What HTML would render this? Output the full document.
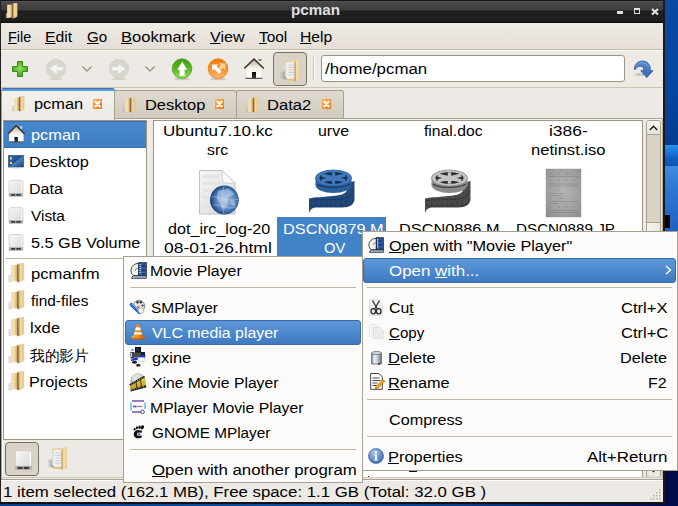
<!DOCTYPE html>
<html><head><meta charset="utf-8">
<style>
*{margin:0;padding:0;box-sizing:border-box}
html,body{width:678px;height:506px;overflow:hidden;background:#000c48}
body{position:relative;font-family:"Liberation Sans",sans-serif;font-size:14px;color:#000}
.a{position:absolute}
.t{position:absolute;white-space:pre;line-height:15px;font-size:14.7px}
.u{text-decoration:underline;text-underline-offset:1px;text-decoration-thickness:1px}
svg{position:absolute;overflow:visible}
</style></head><body>
<svg width="0" height="0" style="position:absolute">
<defs>
<linearGradient id="gFold" x1="0" y1="0" x2="1" y2="0"><stop offset="0" stop-color="#f1dcaa"></stop><stop offset=".45" stop-color="#f5e2b4"></stop><stop offset="1" stop-color="#d2ad6c"></stop></linearGradient>
<linearGradient id="gFold2" x1="0" y1="0" x2="1" y2="0"><stop offset="0" stop-color="#c49d5e"></stop><stop offset=".35" stop-color="#f0d7a0"></stop><stop offset="1" stop-color="#e5c78c"></stop></linearGradient>
<linearGradient id="gClose" x1="0" y1="0" x2="1" y2="1"><stop offset="0" stop-color="#ffae58"></stop><stop offset="1" stop-color="#fb7408"></stop></linearGradient>
<symbol id="fold16" viewBox="0 0 18 20">
<path d="M0.5 13.5 C1 12.5 3 12 4.5 12.5 L4.5 19 C3 19.5 1 19 0.5 18Z" fill="url(#gSh)"></path>
<path d="M3.2 13 L4.5 12.8 L4.5 18.6 L3.4 18.4Z" fill="#f2f4f6"></path>
<path d="M4 2.2 L10.3 1.8 L10.3 18.2 L4 18.6Z" fill="url(#gFold)"></path>
<path d="M10 1.6 L11.8 1.2 L11.9 19.6 L10 18.4Z" fill="#8d6a38"></path>
<path d="M11.6 0.4 L17.2 0 L17.2 17 L11.8 19.6Z" fill="url(#gFold2)"></path>
</symbol>
</defs>
</svg>

<!-- desktop -->
<div class="a" style="left:665px;top:0;width:13px;height:145px;background:linear-gradient(#0a4aa0,#0646a0 60%,#053c90)"></div>
<div class="a" style="left:665px;top:145px;width:13px;height:23px;background:linear-gradient(175deg,#2a92f4 0,#1a78e0 30%,#0f5cc0 60%,#0d55b5 100%)"></div>
<div class="a" style="left:665px;top:166px;width:13px;height:65px;background:linear-gradient(#3d8ce2,#2c74d2 40%,#2262c2)"></div>
<div class="a" style="left:665px;top:215px;width:5px;height:13px;background:#050505"></div>
<div class="a" style="left:665px;top:231px;width:13px;height:275px;background:#000c48"></div>
<!-- window -->
<div class="a" style="left:0;top:0;width:665px;height:503px;background:#edeae5"></div>
<!-- title bar -->
<div class="a" style="left:0;top:0;width:665px;height:23px;background:linear-gradient(#161616 0,#161616 1px,#5b5b5b 1px,#4a4a4a 2px,#3c3c3c 10px,#1f1f1f 11px,#1e1e1e 21px,#111 22px)"></div>
<div class="a" style="left:663px;top:0;width:2px;height:503px;background:#1a1a1a"></div>
<div class="a" style="left:0;top:0;width:1px;height:506px;background:#222"></div>
<svg style="left:4px;top:3px" width="14" height="16" viewBox="0 0 18 20" preserveAspectRatio="none"><use href="#fold16"></use></svg>
<div class="t" style="font-weight: bold; color: rgb(224, 224, 224); left: 291.4px; top: 3px; transform-origin: 0px 0px; transform: scaleX(1.0344);">pcman</div>
<div class="a" style="left:617px;top:11px;width:6px;height:3px;background:#ddd"></div>
<div class="a" style="left:634px;top:8px;width:6px;height:6px;border:1px solid #ddd;border-top-width:2px"></div>
<svg style="left:650.5px;top:7.5px" width="8" height="7.5" viewBox="0 0 8 7.5"><path d="M1 1L7 6.5M7 1L1 6.5" stroke="#e2e2e2" stroke-width="2.2"></path><rect x="2.8" y="2.5" width="2.4" height="2.5" fill="#e2e2e2"></rect></svg>

<!-- menubar -->
<div class="a" style="left:1px;top:23px;width:662px;height:26px;background:linear-gradient(#edeae4,#e6dfd8)"></div>
<div class="a" style="left:1px;top:49px;width:662px;height:1px;background:#c8bcaa"></div>
<div class="a" style="left:1px;top:50px;width:662px;height:1px;background:#fbfaf8"></div>
<div class="t" style="left: 8.32px; top: 30.3px; transform-origin: 0px 0px; transform: scaleX(0.9779);"><span class="u">F</span>ile</div>
<div class="t" style="left: 44.93px; top: 30.3px; transform-origin: 0px 0px; transform: scaleX(1.0731);"><span class="u">E</span>dit</div>
<div class="t" style="left: 87px; top: 30.3px; transform-origin: 0px 0px; transform: scaleX(1.0296);"><span class="u">G</span>o</div>
<div class="t" style="left: 120.88px; top: 30.3px; transform-origin: 0px 0px; transform: scaleX(1.1251);"><span class="u">B</span>ookmark</div>
<div class="t" style="left: 210px; top: 30.3px; transform-origin: 0px 0px; transform: scaleX(1.095);"><span class="u">V</span>iew</div>
<div class="t" style="left: 259px; top: 30.3px; transform-origin: 0px 0px; transform: scaleX(1.0495);"><span class="u">T</span>ool</div>
<div class="t" style="left: 299.93px; top: 30.3px; transform-origin: 0px 0px; transform: scaleX(1.0676);"><span class="u">H</span>elp</div>

<!-- toolbar -->
<div class="a" style="left:1px;top:87px;width:662px;height:1px;background:#cdc4b4"></div>

<!-- location entry -->
<div class="a" style="left:321px;top:55px;width:304px;height:27px;background:#fff;border:1px solid #9d9584;border-radius:3px"></div>
<div class="t" style="left: 324.8px; top: 62.3px; transform-origin: 0px 0px; transform: scaleX(1.1484);">/home/pcman</div>

<!-- toolbar icons -->
<svg style="left:12px;top:61px" width="16" height="16" viewBox="0 0 16 16">
<defs><radialGradient id="gPlus" cx=".5" cy=".45" r=".6"><stop offset="0" stop-color="#8fe35a"></stop><stop offset="1" stop-color="#3f9a1a"></stop></radialGradient></defs>
<path d="M5.5 0.5h5v5h5v5h-5v5h-5v-5h-5v-5h5z" fill="url(#gPlus)" stroke="#3a8a17" stroke-width="1"></path>
</svg>
<svg style="left:46px;top:59px" width="20" height="21" viewBox="0 0 20 21">
<ellipse cx="10" cy="20" rx="7" ry="1" fill="#d5d1c9"></ellipse>
<circle cx="10" cy="9.8" r="9.6" fill="#d8d6ce" stroke="#d0cdc4" stroke-width=".6"></circle>
<path d="M3.8 9.6 L10.7 4.9 L10.7 8 L17.1 8 L17.1 11.5 L10.7 11.5 L10.7 14.9Z" fill="#f4f3ef"></path>
</svg>
<svg style="left:82px;top:66px" width="10" height="6"><path d="M0.5 0.5 L5 5 L9.5 0.5" fill="none" stroke="#9d9080" stroke-width="1.3"></path></svg>
<svg style="left:109px;top:59px" width="20" height="21" viewBox="0 0 20 21">
<ellipse cx="10" cy="20" rx="7" ry="1" fill="#d5d1c9"></ellipse>
<circle cx="10" cy="9.8" r="9.6" fill="#d8d6ce" stroke="#d0cdc4" stroke-width=".6"></circle>
<path d="M16.2 9.6 L9.3 4.9 L9.3 8 L2.9 8 L2.9 11.5 L9.3 11.5 L9.3 14.9Z" fill="#f4f3ef"></path>
</svg>
<svg style="left:145px;top:66px" width="10" height="6"><path d="M0.5 0.5 L5 5 L9.5 0.5" fill="none" stroke="#9d9080" stroke-width="1.3"></path></svg>
<svg style="left:168px;top:55px" width="28" height="28" viewBox="0 0 28 28">
<defs><linearGradient id="gUp" x1="0" y1="0" x2="0" y2="1"><stop offset="0" stop-color="#3e9c10"></stop><stop offset=".55" stop-color="#5cb82a"></stop><stop offset="1" stop-color="#98e25c"></stop></linearGradient></defs>
<ellipse cx="14" cy="24" rx="8" ry="1.3" fill="#b5b0a6" opacity=".6"></ellipse>
<circle cx="14" cy="13.6" r="9.8" fill="url(#gUp)" stroke="#48a01c" stroke-width=".8"></circle>
<path d="M14.2 6.5 L19.3 14.8 L16.6 14.8 L16.6 21 L11.6 21 L11.6 14.8 L9.2 14.8Z" fill="#fbfdf8"></path>
</svg>
<svg style="left:204px;top:55px" width="28" height="28" viewBox="0 0 28 28">
<defs><linearGradient id="gOr" x1="0" y1="0" x2="0" y2="1"><stop offset="0" stop-color="#f07c10"></stop><stop offset=".6" stop-color="#f79430"></stop><stop offset="1" stop-color="#ffbe70"></stop></linearGradient></defs>
<ellipse cx="14" cy="24" rx="8" ry="1.3" fill="#b5b0a6" opacity=".6"></ellipse>
<circle cx="14" cy="13.6" r="9.8" fill="url(#gOr)" stroke="#ea7a14" stroke-width=".8"></circle>
<path d="M15.5 8 L21.5 8.5 L21 15 L19 13 L16 16 L13.5 13.5 L16.5 10.5Z" fill="#ffd9ad" opacity=".85"></path>
<path d="M8 9.5 L14.5 9.5 L12.5 11.5 L17.5 16.5 L15 19 L10 14 L8 16Z" fill="#fbfbfb"></path>
</svg>
<svg style="left:238px;top:54px" width="32" height="30" viewBox="0 0 32 30">
<defs><linearGradient id="gHw" x1="0" y1="0" x2="0" y2="1"><stop offset="0" stop-color="#b9a896"></stop><stop offset=".45" stop-color="#f6f2ee"></stop><stop offset="1" stop-color="#fffefc"></stop></linearGradient>
<linearGradient id="gDoor" x1="0" y1="0" x2="0" y2="1"><stop offset="0" stop-color="#000"></stop><stop offset="1" stop-color="#4a3f30"></stop></linearGradient></defs>
<path d="M7.5 14 L16 5.5 L24.5 14 L24.5 24.5 L7.5 24.5Z" fill="url(#gHw)"></path>
<path d="M6.3 14.5 L16 5 L25.7 14.5" fill="none" stroke="#3f3122" stroke-width="1.6" stroke-linejoin="round"></path>
<path d="M20.5 6 L23.5 6" stroke="#3f3122" stroke-width="1.2"></path>
<rect x="14" y="18" width="4" height="6.5" fill="url(#gDoor)"></rect>
<path d="M7.5 24.3 L24.5 24.3" stroke="#3a3022" stroke-width="1"></path>
<path d="M7.6 14 L7.6 24 M24.4 14 L24.4 24" stroke="#d8d0c6" stroke-width=".5"></path>
</svg>
<div class="a" style="left:273px;top:52px;width:34px;height:34px;background:#d8d2c8;border:1px solid #776d5d;border-radius:4px"></div>
<svg width="0" height="0"><defs>
<linearGradient id="gOf" x1="0" y1="0" x2="1" y2="0"><stop offset="0" stop-color="#e6c688"></stop><stop offset=".4" stop-color="#f8e2b0"></stop><stop offset="1" stop-color="#e9cc92"></stop></linearGradient>
<linearGradient id="gSh" x1="1" y1="0" x2="0" y2="0"><stop offset="0" stop-color="#8f8a82" stop-opacity=".7"></stop><stop offset="1" stop-color="#8f8a82" stop-opacity="0"></stop></linearGradient>
<symbol id="ofold" viewBox="0 0 28 28">
<path d="M4 15.5 L9.5 15.5 L9.5 23.5 L4 23Z" fill="url(#gSh)"></path>
<path d="M9 4.8 L24 3.3 L24 24.4 L9 24.4Z" fill="#edd096"></path>
<path d="M8.6 7.2 L12.5 6.4 L12.5 22.5 L9.2 22.8Z" fill="#dedede"></path>
<path d="M11 6 L19 5.6 L19 23.3 L10 23.3Z" fill="#eeeeee"></path>
<path d="M12.5 9h5.5M12.5 11.5h5.5M12.5 14h5.5M12.5 16.5h5.5M12.5 19h5.5" stroke="#c6c6c6" stroke-width=".8"></path>
<path d="M9.2 17.5 L10.2 24.2 L19 25.2 L19 22.8 L10.5 22.8Z" fill="#e2c384"></path>
<path d="M9.5 21 L10.2 23.5" stroke="#5a8fcf" stroke-width=".8"></path>
<path d="M19 5.5 L24 3.3 L24 20.5 L19 25.4Z" fill="url(#gOf)"></path>
<path d="M19 5.5 L19 25.4" stroke="#b38d52" stroke-width="1"></path>
</symbol></defs></svg>
<svg style="left:276px;top:56px" width="28" height="28"><use href="#ofold"></use></svg>
<div class="a" style="left:313px;top:57px;width:1px;height:23px;background:#c9c3b8"></div>
<div class="a" style="left:314px;top:57px;width:1px;height:23px;background:#fbfaf8"></div>
<svg style="left:628px;top:56px" width="32" height="28" viewBox="0 0 32 28">
<defs><linearGradient id="gRef" x1="0" y1="0" x2="0" y2="1"><stop offset="0" stop-color="#5a8bd2"></stop><stop offset="1" stop-color="#3565b0"></stop></linearGradient></defs>
<ellipse cx="12" cy="18.5" rx="5" ry="1.5" fill="#bdb8ae" opacity=".7"></ellipse>
<path d="M6.3 13.3 C6.5 8 10.5 5 14.5 5 C19 5 22.3 8.5 22.3 12.8 L22.3 14.7 L25 14.7 L18.8 21.6 L12.8 14.7 L15.6 14.7 L15.6 13 C15.6 11.3 14 10.2 12.3 10.2 C9.8 10.2 8.2 11.6 7.3 13.6 Z" fill="url(#gRef)" stroke="#2a549a" stroke-width=".8" stroke-linejoin="round"></path>
<path d="M8 11 C9 8 12 6.5 15 6.8 C18 7 20.2 9.5 20.5 12.5" fill="none" stroke="#8fb2e4" stroke-width=".8" opacity=".7"></path>
</svg>

<!-- tabs -->
<div class="a" style="left:114px;top:90px;width:123px;height:28px;background:linear-gradient(#dfd9d0,#d2cbbf);border:1px solid #a89f8f;border-bottom:none;border-radius:3px 3px 0 0"></div>
<div class="a" style="left:236px;top:90px;width:108px;height:28px;background:linear-gradient(#dfd9d0,#d2cbbf);border:1px solid #a89f8f;border-bottom:none;border-radius:3px 3px 0 0"></div>
<div class="a" style="left:1px;top:118px;width:662px;height:1px;background:#a59c8b"></div>
<div class="a" style="left:1px;top:119px;width:662px;height:1px;background:#f7f5f1"></div>
<div class="a" style="left:1px;top:88px;width:114px;height:32px;background:linear-gradient(#f4f2ee,#edeae5);border:1px solid #a89f8f;border-top:none;border-bottom:none;border-radius:3px 3px 0 0"></div>
<div class="a" style="left:1px;top:88px;width:114px;height:3px;background:linear-gradient(#3a6cae 0,#3a6cae 1px,#5b9be0 1px);border-radius:3px 3px 0 0"></div>
<svg style="left:11px;top:96px" width="14" height="16" viewBox="0 0 18 20" preserveAspectRatio="none"><use href="#fold16"></use></svg>
<svg style="left:122px;top:97px" width="14" height="16" viewBox="0 0 18 20" preserveAspectRatio="none"><use href="#fold16"></use></svg>
<svg style="left:245px;top:97px" width="14" height="16" viewBox="0 0 18 20" preserveAspectRatio="none"><use href="#fold16"></use></svg>
<div class="t" style="left: 34px; top: 96.8px; transform-origin: 0px 0px; transform: scaleX(1.1158);">pcman</div>
<div class="t" style="left: 144.88px; top: 97.6px; transform-origin: 0px 0px; transform: scaleX(1.1193);">Desktop</div>
<div class="t" style="left: 267.27px; top: 97.6px; transform-origin: 0px 0px; transform: scaleX(1.1309);">Data2</div>
<svg style="left:93px;top:99px" width="9" height="10" viewBox="0 0 9 10"><rect width="9" height="10" fill="url(#gClose)"></rect><path d="M2.3 2.5L6.7 7.5M6.7 2.5L2.3 7.5" stroke="#fff" stroke-width="2" stroke-linecap="round"></path></svg>
<svg style="left:215px;top:99px" width="9" height="10" viewBox="0 0 9 10"><rect width="9" height="10" fill="url(#gClose)"></rect><path d="M2.3 2.5L6.7 7.5M6.7 2.5L2.3 7.5" stroke="#fff" stroke-width="2" stroke-linecap="round"></path></svg>
<svg style="left:322px;top:99px" width="9" height="10" viewBox="0 0 9 10"><rect width="9" height="10" fill="url(#gClose)"></rect><path d="M2.3 2.5L6.7 7.5M6.7 2.5L2.3 7.5" stroke="#fff" stroke-width="2" stroke-linecap="round"></path></svg>

<div class="a" style="left:1px;top:118px;width:1px;height:361px;background:#a89f8f"></div>
<div class="a" style="left:2px;top:120px;width:1px;height:357px;background:#fdfcfb"></div>
<div class="a" style="left:662px;top:118px;width:1px;height:361px;background:#b3aa9a"></div>
<div class="a" style="left:661px;top:120px;width:1px;height:357px;background:#e8e4dc"></div>
<!-- sidebar -->
<div class="a" style="left:3px;top:120px;width:144px;height:320px;background:#fff;border:1px solid #9d9585"></div>
<div class="a" style="left:4px;top:121px;width:142px;height:27px;background:linear-gradient(#4788cc,#3f7dc0);border-top:1px solid #3a6faa;border-bottom:1px solid #3a6faa"></div>
<div class="a" style="left:5px;top:258px;width:141px;height:1px;background:#bfb5a3"></div>
<svg style="left:4px;top:122px" width="24" height="24" viewBox="0 0 24 24">
<defs><linearGradient id="gHw2" x1="0" y1="0" x2="0" y2="1"><stop offset="0" stop-color="#c2b3a2"></stop><stop offset=".5" stop-color="#f8f5f1"></stop><stop offset="1" stop-color="#fffefc"></stop></linearGradient></defs>
<path d="M5 11.5 L12.2 4.3 L19.6 11.5 L19.6 20 L5 20Z" fill="url(#gHw2)"></path>
<path d="M4 12 L12.2 3.8 L20.6 12" fill="none" stroke="#3f3122" stroke-width="1.4" stroke-linejoin="round"></path>
<rect x="16.2" y="4.2" width="2" height="2.5" fill="#ddd6cc"></rect>
<rect x="10.5" y="15" width="3.3" height="5" fill="url(#gDoor)"></rect>
<path d="M5 19.8 L19.6 19.8" stroke="#3a3022" stroke-width=".8"></path>
</svg>
<svg style="left:8px;top:155px" width="16" height="14" viewBox="0 0 16 14">
<defs><linearGradient id="gDesk" x1="0" y1="0" x2="1" y2="1"><stop offset="0" stop-color="#3c6fae"></stop><stop offset=".45" stop-color="#1f4f8c"></stop><stop offset=".55" stop-color="#4a7fbe"></stop><stop offset="1" stop-color="#1a3f72"></stop></linearGradient></defs>
<rect x=".5" y=".5" width="15" height="11.5" fill="url(#gDesk)" stroke="#2a4a72" stroke-width=".7"></rect>
<rect x="2" y="2.3" width="2" height="2.2" fill="#e6cf80"></rect><rect x="2" y="6.8" width="2" height="2.2" fill="#e6cf80"></rect>
<path d="M1 12.3 C4 14 12 14 15 12.3" fill="#b8bec6" opacity=".7"></path>
</svg>
<svg width="0" height="0"><defs>
<linearGradient id="gDrv" x1="0" y1="0" x2="1" y2="1"><stop offset="0" stop-color="#f8f8f8"></stop><stop offset="1" stop-color="#d6d6d6"></stop></linearGradient>
<symbol id="drive" viewBox="0 0 16 17">
<path d="M1 2 C1 1 1.8 0.5 2.8 0.5 L13.2 0.5 C14.2 0.5 15 1 15 2 L15 16.3 L1 16.3Z" fill="url(#gDrv)" stroke="#c4c4c4" stroke-width=".6"></path>
<path d="M13.8 1.5 L13.8 13" stroke="#fff" stroke-width=".8"></path>
<rect x="1" y="13.2" width="14" height="3.3" fill="#b0b0b0"></rect>
<rect x="3" y="14" width="4.2" height="1.8" fill="#3d3d3d"></rect><rect x="8.2" y="14" width="4.6" height="1.8" fill="#3d3d3d"></rect>
</symbol></defs></svg>
<svg style="left:8px;top:179.5px" width="16" height="17"><use href="#drive"></use></svg>
<svg style="left:8px;top:206.5px" width="16" height="17"><use href="#drive"></use></svg>
<svg style="left:8px;top:233.5px" width="16" height="17"><use href="#drive"></use></svg>
<svg style="left:7px;top:263px" width="18" height="20"><use href="#fold16"></use></svg>
<svg style="left:7px;top:290px" width="18" height="20"><use href="#fold16"></use></svg>
<svg style="left:7px;top:317px" width="18" height="20"><use href="#fold16"></use></svg>
<svg style="left:7px;top:344px" width="18" height="20"><use href="#fold16"></use></svg>
<svg style="left:7px;top:371px" width="18" height="20"><use href="#fold16"></use></svg>
<div class="t" style="color: rgb(255, 255, 255); left: 30.6px; top: 127.6px; transform-origin: 0px 0px; transform: scaleX(1.1158);">pcman</div>
<div class="t" style="left: 29.39px; top: 154.9px; transform-origin: 0px 0px; transform: scaleX(1.1098);">Desktop</div>
<div class="t" style="left: 29.41px; top: 181.8px; transform-origin: 0px 0px; transform: scaleX(1.0922);">Data</div>
<div class="t" style="left: 30.5px; top: 208.9px; transform-origin: 0px 0px; transform: scaleX(1.0476);">Vista</div>
<div class="t" style="left: 31.4px; top: 236.2px; transform-origin: 0px 0px; transform: scaleX(1.1053);">5.5 GB Volume</div>
<div class="t" style="left: 30.7px; top: 266.9px; transform-origin: 0px 0px; transform: scaleX(1.1352);">pcmanfm</div>
<div class="t" style="left: 31.1px; top: 294px; transform-origin: 0px 0px; transform: scaleX(1.0488);">find-files</div>
<div class="t" style="left: 30.4px; top: 321.1px; transform-origin: 0px 0px; transform: scaleX(1.113);">lxde</div>
<div class="t" style="font-weight: 500; font-size: 14.5px; left: 30.4px; top: 348.8px; transform-origin: 0px 0px; transform: scaleX(0.9783);">我的影片</div>
<div class="t" style="left: 29.29px; top: 375px; transform-origin: 0px 0px; transform: scaleX(1.1061);">Projects</div>
<!-- sidebar buttons -->
<div class="a" style="left:5px;top:442px;width:34px;height:34px;background:#d8d2c8;border:1px solid #776d5d;border-radius:4px"></div>
<svg style="left:13.5px;top:449.5px" width="19" height="20.5" viewBox="0 0 16 17" preserveAspectRatio="none"><use href="#drive"></use></svg>
<svg style="left:43px;top:444px" width="28" height="28"><use href="#ofold"></use></svg>

<!-- file view -->
<div class="a" style="left:153px;top:120px;width:490px;height:358px;background:#fff;border:1px solid #9d9585"></div>
<div class="a" style="left:646px;top:120px;width:15px;height:358px;background:#d9d2c6;border:1px solid #a89f8f;border-radius:3px"></div>
<div class="a" style="left:647px;top:121px;width:13px;height:14px;background:linear-gradient(#f8f6f3,#e7e2db);border-bottom:1px solid #a89f8f;border-radius:2px 2px 0 0"></div>
<svg style="left:648.8px;top:124.5px" width="9" height="6"><path d="M0.8 5 L4.5 1.3 L8.2 5" fill="none" stroke="#1e1e1e" stroke-width="1.5"></path></svg>
<div class="a" style="left:647px;top:222px;width:13px;height:241px;background:linear-gradient(90deg,#f6f4f0,#ebe7e1);border-top:1px solid #a89f8f;border-bottom:1px solid #a89f8f"></div>
<div class="a" style="left:647px;top:463px;width:13px;height:14px;background:linear-gradient(#f8f6f3,#e7e2db);border-top:1px solid #a89f8f;border-radius:0 0 2px 2px"></div>
<div class="t" style="left: 163.14px; top: 123.9px; transform-origin: 0px 0px; transform: scaleX(1.1599);">Ubuntu7.10.kc</div>
<div class="t" style="left: 207.3px; top: 142.5px; transform-origin: 0px 0px; transform: scaleX(1.0762);">src</div>
<div class="t" style="left: 318px; top: 123.9px; transform-origin: 0px 0px; transform: scaleX(1.0844);">urve</div>
<div class="t" style="left: 423.8px; top: 123.6px; transform-origin: 0px 0px; transform: scaleX(1.0706);">final.doc</div>
<div class="t" style="left: 548.9px; top: 123.6px; transform-origin: 0px 0px; transform: scaleX(1.1841);">i386-</div>
<div class="t" style="left: 531.4px; top: 142.8px; transform-origin: 0px 0px; transform: scaleX(1.1264);">netinst.iso</div>
<!-- globe doc -->
<svg style="left:198px;top:169px" width="42" height="48" viewBox="0 0 42 48">
<defs><linearGradient id="gDoc" x1="0" y1="0" x2="1" y2="1"><stop offset="0" stop-color="#f6f6f6"></stop><stop offset="1" stop-color="#d8d8d8"></stop></linearGradient>
<radialGradient id="gGlobe" cx=".55" cy=".5" r=".55"><stop offset="0" stop-color="#a6bfdf"></stop><stop offset=".6" stop-color="#5b86c0"></stop><stop offset="1" stop-color="#173f7a"></stop></radialGradient></defs>
<path d="M1.5 1.5 L24 1.5 L37 14.5 L37 45 L1.5 45Z" fill="url(#gDoc)" stroke="#c2c2c2" stroke-width="1"></path>
<path d="M24 1.5 L25 13.5 L37 14.5Z" fill="#fdfdfd" stroke="#c8c8c8" stroke-width=".8"></path>
<path d="M5 7.5h17M5 14.5h17M5 21.5h17M5 28.5h14M5 35.5h14" stroke="#e3e3e3" stroke-width="3"></path>
<circle cx="26.4" cy="31" r="14.4" fill="url(#gGlobe)"></circle>
<path d="M20 22 C23 20 26 22 28 20 C31 19 34 22 36 25 C34 27 32 27 30 29 C28 32 31 35 28 39 C25 41 23 38 22 35 C21 32 18 30 19 27Z" fill="#d0dff0" opacity=".45"></path>
<path d="M33 30 C35 31 37 33 38 36 C36 38 34 37 33 35Z" fill="#d0dff0" opacity=".4"></path>
<path d="M13 28 C20 26 30 34 40 30 M15 36 C22 35 30 41 38 38 M26 17 C23 25 24 38 26 45" stroke="#e4eef8" stroke-width=".6" fill="none" opacity=".6"></path>
</svg>
<!-- blue reel -->
<svg width="0" height="0"><defs>
<symbol id="reel" viewBox="0 0 60 54">
<path d="M7 34.5 C15 32.5 36 33 42 29.5 C45.5 27.5 46 25 46 19 L52.5 17 L52.5 35 C52.5 40 48 43.5 40 43.5 L15 43.5 C11 43.5 8 45 7 49.5 Z" style="fill:var(--s)"></path>
<path d="M9 36.5 C18 35 38 37 46 33.5 C49 32 50.5 29 51 26" style="stroke:var(--p)" stroke-width="1" stroke-dasharray="1 1" fill="none"></path>
<path d="M9 42 L42 42 C47 42 50.5 39 51 35" style="stroke:var(--p)" stroke-width="1" stroke-dasharray="1 1" fill="none"></path>
<path d="M14 38 L14 41 M19 38 L19 41 M24 38 L24 41 M29 38 L29 41 M34 38 L34 41 M39 37.5 L39 41 M44 36 L44 40.5" style="stroke:var(--p)" stroke-width=".6" opacity=".6"></path>
<path d="M13.5 14 L13.5 21 A18 8 0 0 0 49.5 21 L49.5 14 Z" style="fill:var(--sd)"></path>
<path d="M15 20 C20 24 40 25 48 20" style="stroke:var(--p)" stroke-width="1.2" fill="none" opacity=".7"></path>
<ellipse cx="31.5" cy="14" rx="18" ry="8" style="fill:var(--t);stroke:var(--sd)" stroke-width=".8"></ellipse>
<ellipse cx="31.5" cy="14" rx="14" ry="6" style="fill:var(--h)"></ellipse>
<path d="M31.5 14 L31.50 19.80 M31.5 14 L19.81 16.90 M31.5 14 L19.81 11.10 M31.5 14 L31.50 8.20 M31.5 14 L43.19 11.10 M31.5 14 L43.19 16.90" style="stroke:var(--t)" stroke-width="3.4"></path>
<ellipse cx="31.5" cy="14" rx="4.5" ry="2.3" style="fill:var(--t)"></ellipse>
</symbol></defs></svg>
<svg style="left:302px;top:164px;--s:#22497a;--p:#0f2a4a;--sd:#2d5e9c;--t:#4279be;--h:#12304f" width="60" height="54"><use href="#reel"></use></svg>
<svg style="left:418px;top:164px;--s:#4a4a4a;--p:#1e1e1e;--sd:#8a8a8a;--t:#c4c4c4;--h:#2e2e2e" width="60" height="54"><use href="#reel"></use></svg>
<!-- thumbnail -->
<div class="a" style="left:546px;top:169px;width:35px;height:48px;background:radial-gradient(ellipse at 50% 45%,#b2b5b1,#9da09c 65%,#878a86);box-shadow:0 0 1px #777"></div>
<svg style="left:546px;top:169px" width="35" height="48" viewBox="0 0 35 48">
<g stroke="#6d706c" stroke-width=".6" opacity=".55">
<path d="M4 4.5h2M12 4.5h2M19 4.5h7"></path>
<path d="M3 7.5h29"></path>
<path d="M4 11.5h2M12 11.5h2M19 11.5h2M27 11.5h2"></path>
<path d="M3 15h29M3 17h12M19 17h13"></path>
<path d="M4 21h2M12 21h2"></path>
<path d="M3 24.5h15M3 26.5h12"></path>
<path d="M4 29.5h2M11 29.5h7M26 29.5h2"></path>
<path d="M3 32.5h29M3 34.5h10"></path>
<path d="M4 38h2M12 38h2M19 38h2M27 38h2"></path>
<path d="M3 41.5h29M3 43.5h29"></path>
</g>
</svg>
<div class="t" style="left: 167.8px; top: 222.2px; transform-origin: 0px 0px; transform: scaleX(1.0978);">dot_irc_log-20</div>
<div class="t" style="left: 164.3px; top: 240.9px; transform-origin: 0px 0px; transform: scaleX(1.1897);">08-01-26.html</div>
<div class="a" style="left:277px;top:217px;width:109px;height:40px;background:#4283c7"></div>
<div class="t" style="color: rgb(255, 255, 255); left: 282.59px; top: 222.1px; transform-origin: 0px 0px; transform: scaleX(1.1111);">DSCN0879.M</div>
<div class="t" style="color: rgb(255, 255, 255); left: 324px; top: 240.9px; transform-origin: 0px 0px; transform: scaleX(0.9989);">OV</div>
<div class="t" style="left: 399.29px; top: 222.1px; transform-origin: 0px 0px; transform: scaleX(1.1089);">DSCN0886.M</div>
<div class="t" style="left: 516.26px; top: 222.1px; transform-origin: 0px 0px; transform: scaleX(1.0357);">DSCN0889.JP</div>

<!-- status bar -->
<div class="a" style="left:1px;top:477px;width:662px;height:1px;background:#cfc7b8"></div>
<div class="a" style="left:1px;top:479px;width:662px;height:1px;background:#a9a192"></div>
<div class="a" style="left:1px;top:480px;width:662px;height:1px;background:#fdfcfb"></div>
<div class="t" style="left: 3.26px; top: 485.3px; transform-origin: 0px 0px; transform: scaleX(1.1448);">1 item selected (162.1 MB), Free space: 1.1 GB (Total: 32.0 GB )</div>
<div class="a" style="left:0;top:502px;width:665px;height:2px;background:#111"></div>
<div class="a" style="left:0;top:504px;width:665px;height:2px;background:linear-gradient(90deg,#0a3c8a,#0b4aa0 40%,#0a3a88 70%,#000c48)"></div>
<svg style="left:649px;top:487px" width="13" height="13"><g fill="#b9b0a0"><rect x="10" y="2" width="1.5" height="1.5"></rect><rect x="7" y="5" width="1.5" height="1.5"></rect><rect x="10" y="5" width="1.5" height="1.5"></rect><rect x="4" y="8" width="1.5" height="1.5"></rect><rect x="7" y="8" width="1.5" height="1.5"></rect><rect x="10" y="8" width="1.5" height="1.5"></rect><rect x="1" y="11" width="1.5" height="1.5"></rect><rect x="4" y="11" width="1.5" height="1.5"></rect><rect x="7" y="11" width="1.5" height="1.5"></rect><rect x="10" y="11" width="1.5" height="1.5"></rect></g></svg>

<div class="a" style="left:409px;top:471px;width:8px;height:1px;background:#111"></div>
<div class="a" style="left:368px;top:476px;width:1px;height:1px;background:#333"></div>
<svg style="left:650px;top:469px" width="7" height="4"><path d="M0.5 0.5 L3.5 3.5 L6.5 0.5Z" fill="#1e1e1e"></path></svg>
<!-- left popup menu -->
<div class="a" style="left:123px;top:256px;width:240px;height:227px;background:#fcfbfa;border:1px solid #a8a08f"></div>
<div class="a" style="left:130px;top:287px;width:226px;height:1px;background:#c0b7a6"></div>
<div class="a" style="left:130px;top:449px;width:226px;height:1px;background:#c0b7a6"></div>
<div class="a" style="left:125px;top:320px;width:236px;height:25px;background:linear-gradient(#5c98d8,#3f7ac2);border:1px solid #3a6aa8;border-radius:3px"></div>
<div class="t" style="left: 149.92px; top: 264px; transform-origin: 0px 0px; transform: scaleX(1.0798);">Movie Player</div>
<div class="t" style="left: 151px; top: 301.1px; transform-origin: 0px 0px; transform: scaleX(1.0506);">SMPlayer</div>
<div class="t" style="color: rgb(255, 255, 255); left: 151.5px; top: 325.6px; transform-origin: 0px 0px; transform: scaleX(1.0826);">VLC media player</div>
<div class="t" style="left: 151.5px; top: 350.9px; transform-origin: 0px 0px; transform: scaleX(1.1132);">gxine</div>
<div class="t" style="left: 151.5px; top: 375.7px; transform-origin: 0px 0px; transform: scaleX(1.0677);">Xine Movie Player</div>
<div class="t" style="left: 150.43px; top: 400.9px; transform-origin: 0px 0px; transform: scaleX(1.0743);">MPlayer Movie Player</div>
<div class="t" style="left: 151.5px; top: 425.9px; transform-origin: 0px 0px; transform: scaleX(1.0437);">GNOME MPlayer</div>
<div class="t" style="left: 151.5px; top: 462.8px; transform-origin: 0px 0px; transform: scaleX(1.1453);"><span class="u">O</span>pen with another program</div>
<svg width="0" height="0"><defs>
<symbol id="mplay" viewBox="0 0 17 17">
<path d="M9 1.5 C4.5 1.2 1 4.5 1 8.5 C1 11 2 12.5 3.5 13.5 L9 13.5Z" fill="#f2f2f2" stroke="#2a2a2a" stroke-width=".9"></path>
<path d="M5.5 8.5 A2 2 0 0 1 9 7" fill="none" stroke="#666" stroke-width=".8"></path>
<rect x="8.8" y="0.8" width="7.4" height="13" fill="#3b6fc2" stroke="#151515" stroke-width="1"></rect>
<path d="M10 2v10" stroke="#fff" stroke-width="1" stroke-dasharray="1 1"></path>
<rect x="11.5" y="2.5" width="3.5" height="3" fill="#1d3f78"></rect><rect x="11.5" y="6.8" width="3.5" height="3" fill="#1d3f78"></rect><rect x="11.5" y="11" width="3.5" height="1.8" fill="#1d3f78"></rect>
<path d="M1.5 16.3 L3 13.8 L16.3 13.8 L16.3 16.3Z" fill="#dfe6ee" stroke="#2a2a2a" stroke-width=".9"></path>
<path d="M4 15 L15 15" stroke="#4a7fc8" stroke-width=".8"></path>
</symbol></defs></svg>
<svg style="left:129.5px;top:261.5px" width="17" height="17"><use href="#mplay"></use></svg>
<svg style="left:130px;top:299px" width="15" height="15" viewBox="0 0 15 15">
<circle cx="9" cy="7" r="5.8" fill="#e3e7ec" stroke="#6b7480" stroke-width=".8"></circle>
<circle cx="7.5" cy="3.3" r="1.2" fill="#2a2a2a"></circle><circle cx="10.8" cy="3.3" r="1.2" fill="#2a2a2a"></circle><circle cx="12.6" cy="6.5" r="1.1" fill="#2a2a2a"></circle>
<path d="M1.2 5.5 L9.5 13.5" stroke="#2c66c8" stroke-width="3.2" stroke-linecap="round"></path>
<path d="M2 5 L9 12" stroke="#9cc2f0" stroke-width="1"></path>
<circle cx="8.3" cy="8" r="1.3" fill="#f07d1c"></circle>
<circle cx="11" cy="11.5" r="2.8" fill="#f4f6f8" stroke="#8a94a0" stroke-width=".6"></circle>
</svg>
<svg style="left:131px;top:324px" width="14" height="16" viewBox="0 0 14 16">
<defs><linearGradient id="gCone" x1="0" y1="0" x2="1" y2="0"><stop offset="0" stop-color="#f7a040"></stop><stop offset=".5" stop-color="#ff8a10"></stop><stop offset="1" stop-color="#d85a00"></stop></linearGradient></defs>
<path d="M5.6 0.5 L8.4 0.5 L12 12.5 L2 12.5Z" fill="url(#gCone)"></path>
<path d="M4.8 3.6 L9.2 3.6 L9.9 6.2 L4.1 6.2Z" fill="#fff"></path>
<path d="M3.6 8.2 L10.4 8.2 L11 10.4 L3 10.4Z" fill="#fff"></path>
<path d="M0.5 12 L13.5 12 L13.5 15.2 L0.5 15.2Z" fill="url(#gCone)"></path>
<path d="M0.5 14.5 L13.5 14.5 L13.5 15.2 L0.5 15.2Z" fill="#b84c00"></path>
</svg>
<svg style="left:128px;top:344px" width="20" height="26" viewBox="0 0 20 26">
<rect x="2.5" y="8" width="3.5" height="6.5" fill="#3a3a3a"></rect><rect x="3" y="9" width="1.2" height="4" fill="#c8c8c8"></rect>
<rect x="13" y="8" width="4" height="6.5" fill="#1e1e1e"></rect>
<rect x="6" y="8.5" width="7" height="5" fill="#4a4a4a"></rect>
<rect x="7" y="3" width="6" height="5.8" fill="#0e0e0e"></rect><rect x="8" y="4" width="4" height="3.2" fill="#1c2c50"></rect>
<path d="M3 15.8 C6 13.2 9 14.2 12 12.2 C14 11 15.5 10.8 17.5 10.4 L17.5 12.6 C14.5 13.6 11.5 15 8.5 16.2 C6.5 16.8 4.5 16.4 3 17Z" fill="#1a35e8"></path>
<path d="M3.5 6.5 L5.5 5.5" stroke="#2a40d8" stroke-width="1.2"></path>
<rect x="10" y="13.5" width="6.5" height="4.2" fill="#f4f4f4" stroke="#c8c8c8" stroke-width=".5"></rect>
<ellipse cx="6.5" cy="18.3" rx="2.6" ry="1.4" fill="#111"></ellipse>
<ellipse cx="10.3" cy="21.3" rx="2.2" ry="1.3" fill="#222" stroke="#7a5a5a" stroke-width=".5"></ellipse>
</svg>
<svg style="left:128px;top:372px" width="22" height="20" viewBox="0 0 22 20">
<defs><radialGradient id="gXd" cx=".7" cy=".3" r=".8"><stop offset="0" stop-color="#f4c8c8"></stop><stop offset=".35" stop-color="#cfe8c8"></stop><stop offset=".6" stop-color="#e6e6e6"></stop><stop offset="1" stop-color="#a8a8a8"></stop></radialGradient>
<linearGradient id="gXs" x1="0" y1="0" x2="0" y2="1"><stop offset="0" stop-color="#f0d040"></stop><stop offset="1" stop-color="#b8961a"></stop></linearGradient></defs>
<circle cx="10" cy="9" r="7.2" fill="url(#gXd)" stroke="#6a6a6a" stroke-width=".6" stroke-dasharray="1 .6"></circle>
<path d="M1.8 13 L16.5 4.5 L18.2 14.3 L2.6 18.6Z" fill="url(#gXs)"></path>
<path d="M1.8 13 L16.5 4.5" stroke="#111" stroke-width="2"></path>
<path d="M2.6 18.6 L18.2 14.3" stroke="#111" stroke-width="2"></path>
<path d="M3 12.3 L15.8 5" stroke="#fff" stroke-width=".9" stroke-dasharray=".8 1.6"></path>
<path d="M3.6 18.1 L17.5 14.2" stroke="#fff" stroke-width=".9" stroke-dasharray=".8 1.6"></path>
<path d="M8 9.8 L9 16.8 M12.5 7.3 L13.5 15.5" stroke="#222" stroke-width=".9"></path>
</svg>
<svg style="left:130px;top:400px" width="16" height="14" viewBox="0 0 16 14">
<path d="M2 1 L14 1" stroke="#4a2f9a" stroke-width="1.2"></path>
<path d="M2 12 L11 12" stroke="#4a2f9a" stroke-width="1.2"></path>
<path d="M1 2.5 L1 10.5" stroke="#29b6e8" stroke-width="1.2"></path>
<path d="M15 2.5 L15 9" stroke="#29b6e8" stroke-width="1.2"></path>
<path d="M3 6.5h3.5" stroke="#4a48a8" stroke-width="1.6"></path><path d="M7 6.5h5.5" stroke="#8a8a9a" stroke-width="1.2"></path>
<circle cx="12.5" cy="11.8" r="1.8" fill="#fff" stroke="#3a3a6a" stroke-width=".9"></circle>
</svg>
<svg style="left:133px;top:424.5px" width="11" height="14" viewBox="0 0 11 14">
<path d="M5.5 5 C2 5 0.5 7.5 0.8 10 C1.2 12.8 4.5 14 7.5 13 C9 12.5 9.5 11 8.5 10.5 L5.5 10.8 C4 10.8 3.5 9.5 4 8.5 C4.5 7.5 6 7.3 7.5 7.8 C9 8.3 9.5 6.5 8.5 5.8 C7.5 5.2 6.5 5 5.5 5Z" fill="#111"></path>
<ellipse cx="6" cy="9.2" rx="1.6" ry="1.1" fill="#7a6aa8"></ellipse>
<ellipse cx="1.6" cy="4.2" rx="1" ry="1.2" fill="#111"></ellipse><ellipse cx="3.9" cy="2.8" rx="1.1" ry="1.5" fill="#111"></ellipse><ellipse cx="6.5" cy="2.2" rx="1.2" ry="1.7" fill="#111"></ellipse><ellipse cx="9.3" cy="2.3" rx="1.6" ry="2.2" fill="#111" transform="rotate(25 9.3 2.3)"></ellipse>
</svg>

<!-- right popup menu -->
<div class="a" style="left:362px;top:231px;width:316px;height:240px;background:#fcfbfa;border:1px solid #a8a08f"></div>
<div class="a" style="left:363px;top:258px;width:313px;height:25px;background:linear-gradient(#5c98d8,#3f7ac2);border:1px solid #3a6aa8;border-radius:3px"></div>
<div class="a" style="left:367px;top:287px;width:305px;height:1px;background:#c0b7a6"></div>
<div class="a" style="left:367px;top:399px;width:305px;height:1px;background:#c0b7a6"></div>
<div class="a" style="left:367px;top:436px;width:305px;height:1px;background:#c0b7a6"></div>
<svg style="left:368px;top:237px" width="16" height="16"><use href="#mplay"></use></svg>
<div class="t" style="left: 389px; top: 239px; transform-origin: 0px 0px; transform: scaleX(1.107);"><span class="u">O</span>pen with "Movie Player"</div>
<div class="t" style="color: rgb(255, 255, 255); left: 389px; top: 264.1px; transform-origin: 0px 0px; transform: scaleX(1.1515);">Open <span class="u">w</span>ith...</div>
<svg style="left:665px;top:265px" width="7" height="10"><path d="M1 1 L5.5 5 L1 9" fill="none" stroke="#fff" stroke-width="1.4"></path></svg>
<div class="t" style="left: 389px; top: 300.7px; transform-origin: 0px 0px; transform: scaleX(1.0801);">Cu<span class="u">t</span></div>
<div class="t" style="left: 389px; top: 325.9px; transform-origin: 0px 0px; transform: scaleX(1.0302);"><span class="u">C</span>opy</div>
<div class="t" style="left: 387.88px; top: 350.7px; transform-origin: 0px 0px; transform: scaleX(1.1214);"><span class="u">D</span>elete</div>
<div class="t" style="left: 387.89px; top: 375.9px; transform-origin: 0px 0px; transform: scaleX(1.1095);"><span class="u">R</span>ename</div>
<div class="t" style="left: 389px; top: 412.9px; transform-origin: 0px 0px; transform: scaleX(1.1009);">Compress</div>
<div class="t" style="left: 387.88px; top: 449.5px; transform-origin: 0px 0px; transform: scaleX(1.1174);"><span class="u">P</span>roperties</div>
<div class="t" style="left: 620.9px; top: 300.7px; transform-origin: 0px 0px; transform: scaleX(1.1275);">Ctrl+X</div>
<div class="t" style="left: 620.9px; top: 325.9px; transform-origin: 0px 0px; transform: scaleX(1.1245);">Ctrl+C</div>
<div class="t" style="left: 620.09px; top: 350.7px; transform-origin: 0px 0px; transform: scaleX(1.1069);">Delete</div>
<div class="t" style="left: 647.82px; top: 375.9px; transform-origin: 0px 0px; transform: scaleX(1.0832);">F2</div>
<div class="t" style="left: 587.3px; top: 449.5px; transform-origin: 0px 0px; transform: scaleX(1.1532);">Alt+Return</div>
<svg style="left:369px;top:299px" width="14" height="17" viewBox="0 0 14 17">
<path d="M0.5 0.5 L9.5 0.5 L13.5 4.5 L13.5 16.5 L0.5 16.5Z" fill="#ededed" stroke="#d4d4d4" stroke-width=".6"></path>
<path d="M3.5 1.5 L8 9.5 M10.5 1.5 L6 9.5" stroke="#3a3a3a" stroke-width="1.4"></path>
<ellipse cx="4.3" cy="12.3" rx="2.3" ry="2.6" fill="none" stroke="#2a2a2a" stroke-width="1.3"></ellipse>
<ellipse cx="9.7" cy="12.3" rx="2.3" ry="2.6" fill="none" stroke="#2a2a2a" stroke-width="1.3"></ellipse>
</svg>
<svg style="left:369px;top:324px" width="15" height="15" viewBox="0 0 15 15">
<path d="M0.5 0.5 L7 0.5 L9.5 3 L9.5 12 L0.5 12Z" fill="#f4f4f4" stroke="#e3e3e3" stroke-width=".7"></path>
<path d="M4.5 3.5 L11.5 3.5 L14.5 6.5 L14.5 14.5 L4.5 14.5Z" fill="#eeeeee" stroke="#d9d9d9" stroke-width=".7"></path>
<path d="M6 8h7M6 10h7M6 12h7" stroke="#e2e2e2" stroke-width=".6"></path>
</svg>
<svg style="left:370.5px;top:350.5px" width="11" height="14" viewBox="0 0 11 14">
<defs><linearGradient id="gCan" x1="0" y1="0" x2="1" y2="0"><stop offset="0" stop-color="#7d8a98"></stop><stop offset=".3" stop-color="#eef1f4"></stop><stop offset=".6" stop-color="#c5ccd4"></stop><stop offset="1" stop-color="#66717e"></stop></linearGradient></defs>
<path d="M0.6 2 L10.4 2 L10.4 13 L0.6 13Z" fill="url(#gCan)" stroke="#4a5561" stroke-width=".7"></path>
<ellipse cx="5.5" cy="2" rx="4.9" ry="1.5" fill="#d8dee4" stroke="#4a5561" stroke-width=".7"></ellipse>
<rect x="7" y="12" width="2" height="1.6" fill="#333"></rect>
</svg>
<svg style="left:369.5px;top:369px" width="15" height="21" viewBox="0 0 15 21">
<path d="M0.7 4.5 L9 4.5 L12.3 7.8 L12.3 20.3 L0.7 20.3Z" fill="#fff" stroke="#444" stroke-width="1"></path>
<path d="M2.5 9h7M2.5 11.5h8M2.5 14h5M2.5 16.5h4" stroke="#333" stroke-width=".9"></path>
<path d="M6 17.5 L13 10.5 L14.8 12.3 L7.8 19.3 L5.2 20Z" fill="#f6a21a" stroke="#9a5200" stroke-width=".6"></path>
</svg>
<svg style="left:368px;top:448px" width="16" height="16" viewBox="0 0 16 16">
<defs><radialGradient id="gInfo" cx=".4" cy=".3" r=".7"><stop offset="0" stop-color="#a9c7ee"></stop><stop offset="1" stop-color="#3d6db4"></stop></radialGradient></defs>
<circle cx="8" cy="8" r="7.5" fill="url(#gInfo)" stroke="#3a64a0" stroke-width=".7"></circle>
<circle cx="8" cy="4.3" r="1.3" fill="#fff"></circle>
<path d="M6.3 6.5 L9 6.5 L9 11.5 L10 11.5 L10 12.5 L6 12.5 L6 11.5 L7 11.5 L7 7.5 L6.3 7.5Z" fill="#fff"></path>
</svg>



</body></html>
